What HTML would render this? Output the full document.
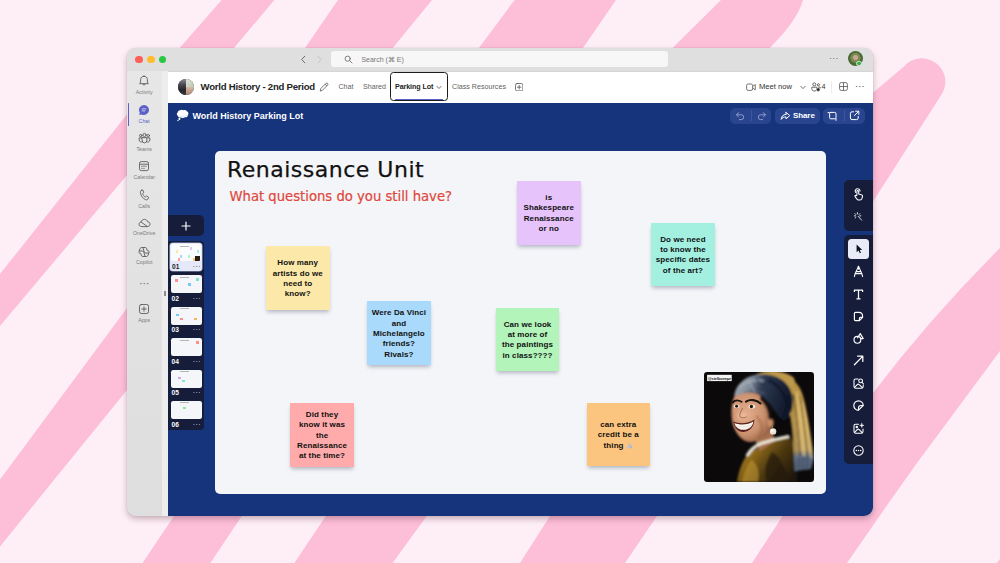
<!DOCTYPE html>
<html lang="en">
<head>
<meta charset="utf-8">
<title>World History Parking Lot</title>
<style>
html,body{margin:0;padding:0;}
body{width:1000px;height:563px;position:relative;overflow:hidden;background:#feeff6;font-family:"Liberation Sans",sans-serif;}
.abs{position:absolute;}
#bg{position:absolute;left:0;top:0;width:1000px;height:563px;}
#P{position:absolute;left:-127px;top:-48px;width:1000px;height:563px;}
#win{position:absolute;left:127px;top:48px;width:746px;height:468px;border-radius:9px;background:#dfdfdf;box-shadow:0 3px 6px rgba(90,40,60,.32),0 0 1.5px rgba(0,0,0,.12);overflow:hidden;}
#side{position:absolute;left:127px;top:71px;width:35px;height:445px;background:linear-gradient(180deg,#e7e7e7 0,#e2e2e2 50%,#dedede 100%);}
#side2{position:absolute;left:162px;top:71px;width:6px;height:445px;background:#ededed;}
#hdr{position:absolute;left:168px;top:71.5px;width:705px;height:31px;background:#fff;}
#wb{position:absolute;left:168px;top:102.5px;width:705px;height:413.5px;background:#16347c;}
#canvas{position:absolute;left:214.5px;top:150.5px;width:611.6px;height:343px;border-radius:5px;background:#f3f5f8;}
.tl{position:absolute;width:7.8px;height:7.8px;border-radius:50%;}
.lbl{position:absolute;width:41px;line-height:6.4px;text-align:center;font-size:5.2px;color:#7a7a7a;letter-spacing:.05px;}
.tab{position:absolute;font-size:7.15px;line-height:10.5px;color:#5f5f5f;white-space:nowrap;}
.pill{top:107.5px;height:16.3px;border-radius:5.5px;background:#29458f;}
.th{width:30.6px;height:18px;box-sizing:border-box;background:#f5f6f9;border-radius:2.2px;overflow:hidden;}
.th i{position:absolute;width:2.6px;height:2.6px;display:block;}
.tn{font-size:6.6px;line-height:8px;color:#fff;font-weight:bold;letter-spacing:.1px;}
.td{font-size:8px;line-height:8px;color:#cfd4e6;letter-spacing:.1px;}
.ti{left:852.1px;width:13px;height:13px;}
.hw{font-family:"DejaVu Sans","Liberation Sans",sans-serif;}
.note{position:absolute;width:63.5px;height:63.5px;box-shadow:0 3px 4px -1px rgba(50,55,80,.33);display:flex;align-items:center;justify-content:center;text-align:center;font-family:"Liberation Sans",sans-serif;font-weight:bold;font-size:8px;line-height:10.35px;color:#111;letter-spacing:.1px;}
.note div{white-space:nowrap;position:relative;top:1px;}
</style>
</head>
<body>
<svg id="bg" viewBox="0 0 1000 563">
<rect width="1000" height="563" fill="#feeff6"/>
<g fill="#fdbed8">
<path d="M221.6,0 L274.4,0 L235.2,46.4 L0,326 L0,274 L181,46.4 Z"/>
<path d="M338,0 L432,0 L394,46.4 L127,390 L0,546.5 L0,479.4 L127,308 L306,46.4 Z"/>
<path d="M514.6,0 L616,0 L584,46.4 L240.8,517.6 L210.4,563 L142.6,563 L173,517.6 L480,46.4 Z"/>
<path d="M721,0 L803,0 Q797,21 771,46.4 L425.6,517.6 L392.6,563 L294.4,563 L324.8,517.6 L674,46.4 Z"/>
<path d="M520,563 L549,517.6 L873,92.7 L904,66.5 A23.5 23.5 0 0 1 942.5,93 L873,201.4 L656,517.6 L625,563 Z"/>
<path d="M752,563 L782,517 L873,393 Q930,318 1000,248 L1000,351 L917,463 L890.7,500 L847,563 Z"/>
<path d="M997,563 L1000,559 L1000,563 Z"/>
</g>
</svg>

<div id="win">
  <div id="P">
  <!-- title bar -->
  <div class="tl" style="left:135.2px;top:55.5px;background:#fe5f57;"></div>
  <div class="tl" style="left:147.1px;top:55.5px;background:#febc2e;"></div>
  <div class="tl" style="left:158.6px;top:55.5px;background:#28c840;"></div>
  <svg class="abs" style="left:299px;top:55px;" width="26" height="9" viewBox="0 0 26 9" fill="none" stroke-width="1" stroke-linecap="round" stroke-linejoin="round"><path d="M5.8,1.2 L2.6,4.5 L5.8,7.8" stroke="#6a6a6a"/><path d="M19,1.2 L22.2,4.5 L19,7.8" stroke="#c2c2c2"/></svg>
  <div class="abs" style="left:331px;top:51px;width:336.5px;height:16.4px;border-radius:3px;background:#f7f7f7;"></div>
  <svg class="abs" style="left:344px;top:55px;" width="9" height="9" viewBox="0 0 9 9" fill="none" stroke="#707070" stroke-width="0.9" stroke-linecap="round"><circle cx="3.7" cy="3.7" r="2.6"/><path d="M5.7,5.7 L8,8"/></svg>
  <div class="abs" id="srch" style="left:361.4px;top:56px;font-size:7px;color:#767676;white-space:nowrap;">Search (⌘ E)</div>
  <div class="abs" style="left:829px;top:54.2px;font-size:9px;color:#666;letter-spacing:.2px;line-height:9px;">···</div>
  <div class="abs" id="av2" style="left:847.5px;top:51.3px;width:15px;height:15px;border-radius:50%;background:radial-gradient(circle at 50% 45%,#c9a58c 0 22%,#7a8a55 23% 45%,#4d6a35 46% 100%);overflow:hidden;"></div>
  <div class="abs" style="left:856.2px;top:60.8px;width:5.4px;height:5.4px;border-radius:50%;background:#2fb344;border:.8px solid #e0e0e0;box-sizing:border-box;"></div>

  <div class="abs" style="left:127px;top:69.5px;width:746px;height:2px;background:linear-gradient(180deg,rgba(0,0,0,0),rgba(0,0,0,.05));"></div>
  <div id="side"></div>
  <div id="side2"></div>
  <div id="hdr"></div>
  <div id="wb"></div>
  <div id="canvas"></div>
  <!--SIDEBAR-->
  <div class="abs" style="left:128.1px;top:102.5px;width:1.2px;height:23.5px;background:#5b5fc7;border-radius:1px;"></div>
  <!-- Activity -->
  <svg class="abs" style="left:138.2px;top:75.3px;" width="12" height="12" viewBox="0 0 12 12" fill="none" stroke="#555" stroke-width="0.85" stroke-linejoin="round" stroke-linecap="round"><path d="M6,1.2 C3.9,1.2 2.6,2.8 2.6,4.7 L2.6,7 L1.7,8.7 L10.3,8.7 L9.4,7 L9.4,4.7 C9.4,2.8 8.1,1.2 6,1.2 Z"/><path d="M4.7,9 C4.9,10.4 7.1,10.4 7.3,9"/></svg>
  <div class="lbl" style="left:123.7px;top:89.3px;">Activity</div>
  <!-- Chat (selected) -->
  <svg class="abs" style="left:138.2px;top:103.6px;" width="12" height="12" viewBox="0 0 12 12"><path d="M6,1 A5,5 0 1 1 3.6,10.4 L1.2,11 L1.8,8.7 A5,5 0 0 1 6,1 Z" fill="#5b5fc7"/><path d="M4.2,4.9 H7.9 M4.2,6.9 H6.8" stroke="#e9e9fb" stroke-width="0.8" stroke-linecap="round"/></svg>
  <div class="lbl" style="left:123.7px;top:117.8px;color:#5b5fc7;">Chat</div>
  <!-- Teams -->
  <svg class="abs" style="left:137.7px;top:131.8px;" width="13" height="12" viewBox="0 0 13 12" fill="none" stroke="#555" stroke-width="0.85" stroke-linejoin="round" stroke-linecap="round"><circle cx="6.5" cy="3" r="1.6"/><circle cx="2.7" cy="3.6" r="1.2"/><circle cx="10.3" cy="3.6" r="1.2"/><path d="M4.2,5.6 H8.8 V8.6 A2.3,2.3 0 0 1 4.2,8.6 Z"/><path d="M4,5.9 H1.2 V8 A2,2 0 0 0 4.3,9.7"/><path d="M9,5.9 H11.8 V8 A2,2 0 0 1 8.7,9.7"/></svg>
  <div class="lbl" style="left:123.7px;top:145.8px;">Teams</div>
  <!-- Calendar -->
  <svg class="abs" style="left:138.2px;top:160px;" width="12" height="12" viewBox="0 0 12 12" fill="none" stroke="#555" stroke-width="0.85" stroke-linejoin="round"><rect x="1.5" y="1.6" width="9" height="9" rx="1.8"/><path d="M1.5,4.2 H10.5"/><g fill="#555" stroke="none"><circle cx="4" cy="6.2" r=".65"/><circle cx="6" cy="6.2" r=".65"/><circle cx="8" cy="6.2" r=".65"/><circle cx="4" cy="8.3" r=".65"/><circle cx="6" cy="8.3" r=".65"/></g></svg>
  <div class="lbl" style="left:123.7px;top:174.3px;">Calendar</div>
  <!-- Calls -->
  <svg class="abs" style="left:138.2px;top:189px;" width="12" height="12" viewBox="0 0 12 12" fill="none" stroke="#555" stroke-width="0.85" stroke-linejoin="round" stroke-linecap="round"><path d="M3.4,1.3 L4.8,1 L5.7,3.6 L4.6,4.6 C5,6 6,7.3 7.4,8 L8.5,7 L10.6,8.3 L10,10 C9.6,10.9 8.6,11 7.7,10.7 C4.8,9.6 2.7,6.6 2.4,3.3 C2.3,2.4 2.6,1.6 3.4,1.3 Z"/></svg>
  <div class="lbl" style="left:123.7px;top:202.8px;">Calls</div>
  <!-- OneDrive -->
  <svg class="abs" style="left:137.7px;top:216.5px;" width="13" height="12" viewBox="0 0 13 12" fill="none" stroke="#555" stroke-width="0.85" stroke-linejoin="round" stroke-linecap="round"><path d="M3.6,9.6 C1.9,9.6 1,8.5 1,7.3 C1,6 2,5.2 3,5.1 C3.4,3.4 4.8,2.4 6.4,2.4 C8,2.4 9.2,3.3 9.7,4.8 C11.1,4.9 12,5.9 12,7.2 C12,8.5 11,9.6 9.6,9.6 Z"/><path d="M3.3,5.2 L9.3,9.4"/></svg>
  <div class="lbl" style="left:123.7px;top:229.6px;">OneDrive</div>
  <!-- Copilot -->
  <svg class="abs" style="left:138.2px;top:246px;" width="12" height="12" viewBox="0 0 12 12" fill="none" stroke="#555" stroke-width="0.85" stroke-linejoin="round" stroke-linecap="round"><path d="M4.6,1.5 H7.2 C8,1.5 8.5,2 8.7,2.7 L9.3,4.6 H9.9 C10.8,4.6 11.3,5.4 11,6.3 L10,9.3 C9.8,10 9.2,10.5 8.4,10.5 H4.9 C4.1,10.5 3.5,10 3.3,9.3 L2.7,7.4 H2.1 C1.2,7.4 .7,6.6 1,5.7 L2,2.7 C2.2,2 2.8,1.5 3.6,1.5 Z"/><path d="M4.9,1.6 L6.2,5.8 C6.4,6.5 7,7 7.7,7 H10.6"/><path d="M7.1,10.4 L5.8,6.2 C5.6,5.5 5,5 4.3,5 H1.4"/></svg>
  <div class="lbl" style="left:123.7px;top:258.6px;">Copilot</div>
  <div class="abs" style="left:139.2px;top:278.5px;font-size:10px;line-height:10px;color:#555;letter-spacing:.1px;">···</div>
  <!-- Apps -->
  <svg class="abs" style="left:138.2px;top:302.7px;" width="12" height="12" viewBox="0 0 12 12" fill="none" stroke="#555" stroke-width="0.85" stroke-linejoin="round" stroke-linecap="round"><rect x="1.5" y="1.5" width="9" height="9" rx="1.8"/><path d="M6,3.8 V8.2 M3.8,6 H8.2"/></svg>
  <div class="lbl" style="left:123.7px;top:316.6px;">Apps</div>
  <!--HEADER-->
  <div class="abs" id="av1" style="left:177.9px;top:78.6px;width:16px;height:16px;border-radius:50%;overflow:hidden;background:#3a3a40;">
    <div class="abs" style="left:0;top:0;width:8px;height:16px;background:linear-gradient(180deg,#8c8a92 0,#4a4850 35%,#25242a 70%,#3b3a42 100%);"></div>
    <div class="abs" style="left:8px;top:0;width:8px;height:8px;background:linear-gradient(135deg,#dfe6dc,#b9c7b2);"></div>
    <div class="abs" style="left:8px;top:8px;width:8px;height:8px;background:linear-gradient(180deg,#d9b9a2,#a88672);"></div>
  </div>
  <div class="abs" id="ttl" style="left:200.6px;top:80.2px;font-size:9.6px;font-weight:bold;color:#242424;white-space:nowrap;letter-spacing:-.25px;line-height:13px;">World History - 2nd Period</div>
  <svg class="abs" style="left:319.4px;top:81.6px;" width="10" height="10" viewBox="0 0 10 10" fill="none" stroke="#555" stroke-width="0.8" stroke-linejoin="round" stroke-linecap="round"><path d="M1.3,8.7 L1.9,6.4 L6.9,1.4 A1,1 0 0 1 8.6,3.1 L3.6,8.1 Z"/><path d="M6.2,2.2 L7.8,3.8"/></svg>
  <div class="tab" id="t1" style="left:338.4px;top:81.6px;">Chat</div>
  <div class="tab" id="t2" style="left:363px;top:81.6px;">Shared</div>
  <div class="abs" style="left:389.6px;top:71.6px;width:58px;height:29.8px;box-sizing:border-box;border:1.1px solid #1c1c1c;border-radius:3.5px;"></div>
  <div class="abs" style="left:394.6px;top:98.6px;width:48px;height:1.4px;background:#5b5fc7;border-radius:1px;"></div>
  <div class="tab" id="t3" style="left:395px;top:81.6px;font-weight:bold;color:#242424;letter-spacing:-.1px;">Parking Lot</div>
  <svg class="abs" style="left:436px;top:84.5px;" width="6" height="5" viewBox="0 0 6 5" fill="none" stroke="#555" stroke-width="0.8" stroke-linecap="round" stroke-linejoin="round"><path d="M.9,1.3 L3,3.5 L5.1,1.3"/></svg>
  <div class="tab" id="t4" style="left:452px;top:81.6px;">Class Resources</div>
  <svg class="abs" style="left:515px;top:82.6px;" width="8.4" height="8.4" viewBox="0 0 8.4 8.4" fill="none" stroke="#555" stroke-width="0.8" stroke-linecap="round"><rect x=".5" y=".5" width="7.4" height="7.4" rx="1.6"/><path d="M4.2,2.4 V6 M2.4,4.2 H6"/></svg>
  <!-- right header -->
  <svg class="abs" style="left:745.8px;top:82.6px;" width="10" height="8.4" viewBox="0 0 10 8.4" fill="none" stroke="#555" stroke-width="0.8" stroke-linejoin="round"><rect x=".6" y="1" width="6" height="6.4" rx="1.5"/><path d="M6.8,3.2 L9.3,1.6 V6.8 L6.8,5.2"/></svg>
  <div class="tab" id="t5" style="left:759px;top:81.6px;color:#333;font-size:7.6px;">Meet now</div>
  <svg class="abs" style="left:799.5px;top:84.7px;" width="6" height="5" viewBox="0 0 6 5" fill="none" stroke="#555" stroke-width="0.8" stroke-linecap="round" stroke-linejoin="round"><path d="M.7,1.2 L3,3.6 L5.3,1.2"/></svg>
  <svg class="abs" style="left:810.5px;top:81.8px;" width="10" height="10" viewBox="0 0 10 10" fill="none" stroke="#444" stroke-width="0.8" stroke-linejoin="round"><circle cx="3.3" cy="2.4" r="1.5"/><circle cx="7.4" cy="2.8" r="1.1"/><path d="M.8,5.2 H5.8 V6.6 C5.8,8.2 4.8,9 3.3,9 C1.8,9 .8,8.2 .8,6.6 Z"/><path d="M6.8,5.2 H9.2 V6.4"/><circle cx="7.2" cy="7.6" r="1.9" fill="#333" stroke="#fff" stroke-width=".5"/></svg>
  <div class="tab" style="left:821.6px;top:81.8px;color:#333;font-size:7.2px;">4</div>
  <div class="abs" style="left:831px;top:80.5px;width:.7px;height:12px;background:#ececec;"></div>
  <svg class="abs" style="left:838.5px;top:82.2px;" width="9" height="9" viewBox="0 0 9 9" fill="none" stroke="#555" stroke-width="0.8" stroke-linejoin="round"><rect x=".6" y=".6" width="7.8" height="7.8" rx="1.6"/><path d="M4.5,.6 V8.4 M.6,4.5 H8.4"/></svg>
  <div class="abs" style="left:855px;top:81.5px;font-size:9px;color:#444;letter-spacing:.2px;line-height:9px;">···</div>
  <!--WBTOP-->
  <svg class="abs" style="left:175.6px;top:109px;" width="13" height="13" viewBox="0 0 13 13"><path d="M3.4,1.6 C4.6,.5 6.4,.6 7.2,1.3 C8.6,.7 10.6,1.2 11.2,2.6 C12.6,3.2 12.8,5.2 11.8,6.2 C11.9,7.6 10.4,8.6 9,8.2 C8,9.2 6,9.2 5.1,8.4 C3.6,8.9 2,8.2 1.8,6.8 C.5,6.1 .5,4.1 1.7,3.5 C1.7,2.6 2.4,1.8 3.4,1.6 Z" fill="#fff"/><circle cx="3.4" cy="9.9" r="1.05" fill="#fff"/><circle cx="2" cy="11.5" r=".65" fill="#fff"/><path d="M3.6,6.8 C5,7.8 8.5,7.8 10.6,6.4" stroke="#cfd8ee" stroke-width=".7" fill="none"/></svg>
  <div class="abs" id="wbt" style="left:192.4px;top:109.6px;font-size:9px;font-weight:bold;color:#fff;white-space:nowrap;line-height:12px;letter-spacing:0;">World History Parking Lot</div>
  <!-- pills -->
  <div class="abs pill" style="left:729.5px;width:41px;"></div>
  <div class="abs pill" style="left:775px;width:44.5px;"></div>
  <div class="abs pill" style="left:823.3px;width:41.8px;"></div>
  <svg class="abs" style="left:734.5px;top:110.5px;" width="11" height="10" viewBox="0 0 11 10" fill="none" stroke="#8f9dc9" stroke-width="1" stroke-linecap="round" stroke-linejoin="round"><path d="M3.6,1.6 L1.5,3.8 L3.6,6"/><path d="M1.7,3.8 H6.3 A2.4,2.4 0 0 1 6.3,8.6 H4.4"/></svg>
  <div class="abs" style="left:750.6px;top:110px;width:.7px;height:11px;background:#3e56a0;"></div>
  <svg class="abs" style="left:755.5px;top:110.5px;" width="11" height="10" viewBox="0 0 11 10" fill="none" stroke="#8f9dc9" stroke-width="1" stroke-linecap="round" stroke-linejoin="round"><path d="M7.4,1.6 L9.5,3.8 L7.4,6"/><path d="M9.3,3.8 H4.7 A2.4,2.4 0 0 0 4.7,8.6 H6.6"/></svg>
  <svg class="abs" style="left:779.5px;top:110.5px;" width="11" height="10" viewBox="0 0 11 10" fill="none" stroke="#fff" stroke-width="1" stroke-linecap="round" stroke-linejoin="round"><path d="M6,1.4 L9.8,4.6 L6,7.8 V5.9 C3.6,5.8 2.2,6.6 1.2,8.4 C1.4,5.4 3,3.5 6,3.3 Z"/></svg>
  <div class="abs" id="shr" style="left:793px;top:111.2px;font-size:8px;font-weight:bold;color:#fff;line-height:10.4px;letter-spacing:-.1px;">Share</div>
  <svg class="abs" style="left:827px;top:110px;" width="11" height="11" viewBox="0 0 11 11" fill="none" stroke="#fff" stroke-width="1" stroke-linecap="round" stroke-linejoin="round"><rect x="2.6" y="2.4" width="6.4" height="6.4" rx="1.2"/><path d="M1,2.6 H2.4 M9,8.6 V10.4"/></svg>
  <div class="abs" style="left:844.2px;top:110px;width:.7px;height:11px;background:#3e56a0;"></div>
  <svg class="abs" style="left:849.2px;top:110px;" width="11" height="11" viewBox="0 0 11 11" fill="none" stroke="#fff" stroke-width="1" stroke-linecap="round" stroke-linejoin="round"><path d="M4.6,1.8 H3 A1.6,1.6 0 0 0 1.4,3.4 V8 A1.6,1.6 0 0 0 3,9.6 H7.6 A1.6,1.6 0 0 0 9.2,8 V6.4"/><path d="M6.6,1.2 H9.8 V4.4 M9.6,1.4 L5.4,5.6"/></svg>
  <!--CANVAS-->
  <div class="abs hw" id="h1" style="left:227px;top:155.9px;font-size:22px;color:#111;white-space:nowrap;line-height:28px;letter-spacing:.5px;-webkit-text-stroke:.25px #111;">Renaissance Unit</div>
  <div class="abs hw" id="h2" style="left:229.5px;top:186.8px;font-size:13.2px;color:#e0473c;white-space:nowrap;line-height:20px;-webkit-text-stroke:.2px #e0473c;">What questions do you still have?</div>
  <div class="note" style="left:266px;top:246.2px;background:#fce9a9;"><div>How many<br>artists do we<br>need to<br>know?</div></div>
  <div class="note" style="left:367.2px;top:301.4px;background:#a9d9fb;"><div>Were Da Vinci<br>and<br>Michelangelo<br>friends?<br>Rivals?</div></div>
  <div class="note" style="left:517px;top:181px;background:#e6c3fb;"><div>is<br>Shakespeare<br>Renaissance<br>or no</div></div>
  <div class="note" style="left:651.2px;top:222.7px;background:#a3f0e1;"><div>Do we need<br>to know the<br>specific dates<br>of the art?</div></div>
  <div class="note" style="left:495.8px;top:307.7px;background:#b3f4ba;"><div>Can we look<br>at more of<br>the paintings<br>in class????</div></div>
  <div class="note" style="left:290.3px;top:403.2px;background:#ffabab;"><div>Did they<br>know it was<br>the<br>Renaissance<br>at the time?</div></div>
  <div class="note" style="left:586.5px;top:402.6px;background:#fcc57f;"><div>can extra<br>credit be a<br>thing <svg width="7" height="7" viewBox="0 0 7 7" style="vertical-align:-1px;"><path d="M3.4,.8 L1.4,4.2 L.6,6.4 L2.8,6.2 L3.4,4.4 Z" fill="#b9c7dc"/><path d="M3.6,.8 L5.6,4.2 L6.4,6.4 L4.2,6.2 L3.6,4.4 Z" fill="#a9b9d2"/></svg></div></div>
  <svg class="abs" style="left:704.2px;top:371.5px;border-radius:3.2px;" width="110" height="110" viewBox="0 0 110 110">
    <defs>
      <filter id="bl" x="-10%" y="-10%" width="120%" height="120%"><feGaussianBlur stdDeviation="0.8"/></filter>
      <filter id="bl2" x="-10%" y="-10%" width="120%" height="120%"><feGaussianBlur stdDeviation="0.4"/></filter>
      <linearGradient id="jk" x1="0" y1="0.2" x2="1" y2="0.8"><stop offset="0" stop-color="#b98d2b"/><stop offset=".3" stop-color="#8a6619"/><stop offset=".6" stop-color="#4d3910"/><stop offset="1" stop-color="#1e160a"/></linearGradient>
      <linearGradient id="tb" x1="0" y1="0" x2="1" y2=".25"><stop offset="0" stop-color="#a6adb6"/><stop offset=".3" stop-color="#858f9d"/><stop offset=".5" stop-color="#2e3a52"/><stop offset="1" stop-color="#10182b"/></linearGradient>
      <linearGradient id="yc" x1="0" y1="0" x2="0" y2="1"><stop offset="0" stop-color="#b08a3c"/><stop offset=".45" stop-color="#d1ab5c"/><stop offset=".78" stop-color="#c4a564"/><stop offset=".84" stop-color="#66758a"/><stop offset="1" stop-color="#46546a"/></linearGradient>
      <radialGradient id="sk" cx=".36" cy=".42" r=".7"><stop offset="0" stop-color="#e3ad8c"/><stop offset=".6" stop-color="#cc9270"/><stop offset="1" stop-color="#8c583c"/></radialGradient>
    </defs>
    <rect width="110" height="110" fill="#0b090a"/>
    <g filter="url(#bl)">
      <!-- jacket -->
      <path d="M33,110 C35,98 38,90 43,83 C52,76 70,68 86,65 C91,72 93,90 93,110 Z" fill="url(#jk)"/>
      <path d="M38,110 C40,100 43,93 47,88 C53,90 56,100 54,110 Z" fill="#c79a35" opacity=".55"/>
      <path d="M62,110 C60,98 62,88 68,80 C76,84 82,96 84,110 Z" fill="#241a08" opacity=".7"/>
      <!-- hanging cloth -->
      <path d="M80,3 C90,6 97,14 100,28 C104,44 107,66 110,86 L107,97 L90.5,99 C90,80 89,62 87,48 C85,34 82,20 76,10 Z" fill="url(#yc)"/>
      <path d="M86,20 C89,40 91,62 92.5,84" stroke="#8c6c2c" stroke-width="1.6" fill="none" opacity=".85"/>
      <path d="M89.5,22 C92.5,44 94.5,64 96,84" stroke="#2a2216" stroke-width="1.3" fill="none" opacity=".8"/>
      <path d="M92.5,20 C96,42 98.5,62 100,84" stroke="#e2c784" stroke-width="1.8" fill="none" opacity=".75"/>
      <path d="M96,24 C99.5,44 101.5,64 103.5,84" stroke="#4a3b1e" stroke-width="1.1" fill="none" opacity=".75"/>
      <path d="M99,30 C102.5,50 104.5,68 107,86" stroke="#dcbf7a" stroke-width="1.6" fill="none" opacity=".7"/>
      <path d="M92,86 L106,84 L107,97 L91,99 Z" fill="#56657b" opacity=".85"/>
      <path d="M95,86 V98 M99,85.5 V98 M103,85 V97" stroke="#2f3a4c" stroke-width=".9" opacity=".8"/>
      <!-- yellow top -->
      <path d="M50,4 C58,-3 80,-3 90,6 C92,10 90,15 86,15 C76,8 62,6.5 52,9 Z" fill="#bd9a4c"/>
      <!-- neck -->
      <path d="M49,64 L67,55 L71,69 L56,79 Z" fill="#a8704e"/>
      <!-- face -->
      <path d="M30.5,24 C37,20 50,19 58,24 C66,30 69,42 68,54 C66,62 58,68 48,70 C40,71 33,64 29.5,54 C26.5,45 27,32 30.5,24 Z" fill="url(#sk)"/>
      <ellipse cx="38" cy="44" rx="5" ry="4" fill="#eec0a2" opacity=".6"/>
      <path d="M52,44 C58,50 60,58 54,66" stroke="#94603f" stroke-width="3" fill="none" opacity=".45"/>
      <!-- ear -->
      <ellipse cx="66.4" cy="50" rx="3.2" ry="5.4" transform="rotate(-8 66.4 50)" fill="#c88a66"/>
      <!-- hair -->
      <path d="M56,22 C64,26 69,36 68.5,48 L64.5,47 C64.5,40 62,33 56,28 Z" fill="#15100e"/>
      <!-- turban -->
      <path d="M30.2,24.5 C31,14 40,4 54,2.5 C70,1 84,8 88,22 C90,32 89,42 80,49.5 C76,46 73,42 70,38 C66,30 60,24 50,21 C43,20 36,22 30.2,24.5 Z" fill="url(#tb)"/>
      <path d="M35,16 C42,9 52,7 60,9" stroke="#aab2bd" stroke-width="2.4" fill="none" opacity=".6"/>
      <path d="M40,21 C46,17 54,18 60,22" stroke="#5d6a7c" stroke-width="1.4" fill="none" opacity=".7"/>
      <path d="M52,6 C56,12 58,18 62,24" stroke="#3a465c" stroke-width="1.6" fill="none" opacity=".6"/>
      <path d="M44,8 C47,13 49,17 51,20" stroke="#b4bcc6" stroke-width="1.4" fill="none" opacity=".55"/>
      <path d="M64,8 C74,12 82,22 84,36" stroke="#0c1222" stroke-width="3.2" fill="none" opacity=".55"/>
      <!-- collar -->
      <path d="M43.4,83 C47,77 52,73.5 57,71.5 C66,68.5 76,66 84,64.5" stroke="#ebe5d6" stroke-width="3" fill="none" stroke-linecap="round"/>
    </g>
    <g filter="url(#bl2)">
      <path d="M28.6,30.5 C31,28 34.5,28 37.5,29.8" stroke="#1b120e" stroke-width="1.9" fill="none" stroke-linecap="round"/>
      <path d="M42,29.6 C46,27 52.5,27.6 56.5,31.5" stroke="#1b120e" stroke-width="2.1" fill="none" stroke-linecap="round"/>
      <ellipse cx="32.6" cy="34.2" rx="2.9" ry="1.8" fill="#f1e6dc"/><circle cx="32.6" cy="34.3" r="1.45" fill="#20130d"/>
      <ellipse cx="47.8" cy="34.4" rx="3.4" ry="2" fill="#f1e6dc"/><circle cx="47.4" cy="34.5" r="1.65" fill="#20130d"/>
      <path d="M38.6,36 C36.8,40 35,43 36.2,45 C38,46.4 41.4,46 42.6,44.6" stroke="#96603f" stroke-width="1" fill="none" opacity=".85"/>
      <path d="M28.6,40 C28.2,46 29,52 31,57" stroke="#9a6243" stroke-width="1.6" fill="none" opacity=".5"/>
      <path d="M29.4,49.6 C35,52.2 44,52 50.4,47.6 C50.4,54 46,59.6 39.6,60 C34,60.2 30.2,55.8 29.4,49.6 Z" fill="#5a1f1c"/>
      <path d="M30.4,50.9 C35.6,53.2 44,53 49.4,49.4 C49,53.6 45.4,57.6 39.8,57.8 C35,58 31.4,55 30.4,50.9 Z" fill="#f8f5ee"/>
      <path d="M31,54.2 C36,55.6 43,55.2 48.4,52.6" stroke="#c9c0b2" stroke-width=".4" fill="none"/>
      <circle cx="69.1" cy="59.4" r="3.2" fill="#e9e3d6"/><circle cx="68.2" cy="58.4" r="1.3" fill="#fff"/>
      <path d="M68.4,53.4 V56.4" stroke="#b9a06c" stroke-width=".6"/>
    </g>
    <rect x="3.1" y="2.8" width="24.6" height="6.3" fill="#f4f4f4"/>
    <text x="4" y="7.6" font-family="Liberation Sans, sans-serif" font-size="4.1" font-weight="bold" fill="#111" textLength="22.8" lengthAdjust="spacingAndGlyphs">@stelbonepz</text>
  </svg>
  <!--LEFTPANEL-->
  <div class="abs" style="left:168px;top:214.9px;width:36.3px;height:21.4px;background:#161d3a;border-radius:0 5px 5px 0;"></div>
  <svg class="abs" style="left:181px;top:220.6px;" width="10" height="10" viewBox="0 0 10 10" stroke="#fff" stroke-width="1.2" stroke-linecap="round"><path d="M5,1 V9 M1,5 H9"/></svg>
  <div class="abs" style="left:168px;top:240.5px;width:36.3px;height:189.8px;background:#161d3a;border-radius:0 4px 4px 0;"></div>
  <div class="abs" style="left:169.6px;top:243px;width:32.8px;height:28.4px;background:#e4e8f8;border-radius:3px;box-shadow:0 0 0 .6px #9aa3c4;"></div>
  <div class="abs" style="left:163.5px;top:291.2px;width:.8px;height:5px;background:#8c8c8c;"></div>
  <div class="abs" style="left:165.1px;top:291.2px;width:.8px;height:5px;background:#8c8c8c;"></div>
  <div class="abs th" style="left:170.9px;top:244.3px;height:16.8px;background:#fafbfd;"><i style="left:9px;top:1.6px;width:9px;height:.7px;background:#b5b5b5;"></i><i style="left:5px;top:6px;background:#fce9a9;"></i><i style="left:9px;top:11px;background:#a9d9fb;"></i><i style="left:19px;top:3px;background:#e6c3fb;"></i><i style="left:26px;top:6px;background:#a3f0e1;"></i><i style="left:17px;top:11px;background:#b3f4ba;"></i><i style="left:7px;top:14px;background:#ff9b9b;"></i><i style="left:22px;top:14px;background:#fcc57f;"></i><i style="left:24.5px;top:11.5px;width:5px;height:5px;background:#2a1d12;"></i></div>
  <div class="abs tn" style="left:172px;top:262.8px;color:#1d1d28;">01</div><div class="abs td" style="left:192.6px;top:262.8px;color:#444;">···</div>
  <div class="abs th" style="left:171px;top:275.3px;"><i style="left:9px;top:1.6px;width:9px;height:.7px;background:#b5b5b5;"></i><i style="left:4px;top:4px;background:#ff8f8f;"></i><i style="left:17px;top:8px;background:#7cc8f5;"></i><i style="left:25px;top:3px;background:#7fe3cf;"></i></div>
  <div class="abs tn" style="left:171.6px;top:294.9px;">02</div><div class="abs td" style="left:192.6px;top:294.9px;">···</div>
  <div class="abs th" style="left:171px;top:306.7px;"><i style="left:9px;top:1.6px;width:9px;height:.7px;background:#b5b5b5;"></i><i style="left:5px;top:7px;background:#7cc8f5;"></i><i style="left:9px;top:11px;background:#ff8f8f;"></i><i style="left:23px;top:11px;background:#f9b25e;"></i></div>
  <div class="abs tn" style="left:171.6px;top:326.3px;">03</div><div class="abs td" style="left:192.6px;top:326.3px;">···</div>
  <div class="abs th" style="left:171px;top:338.1px;"><i style="left:9px;top:1.6px;width:9px;height:.7px;background:#b5b5b5;"></i><i style="left:25px;top:3px;background:#ff8f8f;"></i></div>
  <div class="abs tn" style="left:171.6px;top:357.7px;">04</div><div class="abs td" style="left:192.6px;top:357.7px;">···</div>
  <div class="abs th" style="left:171px;top:369.5px;"><i style="left:9px;top:1.6px;width:9px;height:.7px;background:#b5b5b5;"></i><i style="left:7px;top:7px;background:#d9a3f5;"></i><i style="left:11px;top:10px;background:#7fe3cf;"></i></div>
  <div class="abs tn" style="left:171.6px;top:389.1px;">05</div><div class="abs td" style="left:192.6px;top:389.1px;">···</div>
  <div class="abs th" style="left:171px;top:400.9px;"><i style="left:9px;top:1.6px;width:9px;height:.7px;background:#b5b5b5;"></i><i style="left:12px;top:6px;background:#8fe89a;"></i></div>
  <div class="abs tn" style="left:171.6px;top:420.5px;">06</div><div class="abs td" style="left:192.6px;top:420.5px;">···</div>
  <!--RIGHTTOOLS-->
  <div class="abs" style="left:844.4px;top:180px;width:28.6px;height:51.2px;background:#161d3a;border-radius:5px 0 0 5px;"></div>
  <div class="abs" style="left:844.4px;top:235.4px;width:28.6px;height:228.6px;background:#161d3a;border-radius:5px 0 0 5px;"></div>
  <div class="abs" style="left:848.4px;top:239px;width:20.6px;height:19.8px;background:#e9ecf8;border-radius:3.5px;"></div>
  <!-- hand -->
  <svg class="abs ti" style="top:188.2px;" viewBox="0 0 13 13" fill="none" stroke="#fff" stroke-width="1.05" stroke-linecap="round" stroke-linejoin="round"><path d="M4.9,7.2 V3.4 A.9,.9 0 0 1 6.7,3.4 V6 L9.4,6.7 C10.3,6.9 10.7,7.6 10.5,8.5 L10,10.4 C9.7,11.4 9,12 8,12 H6.6 C5.8,12 5.2,11.6 4.8,11 L3,8.4 C2.6,7.7 3.5,7 4.1,7.6 Z"/><path d="M3.6,4.4 A2.4,2.4 0 1 1 8,3.2"/></svg>
  <!-- wand -->
  <svg class="abs ti" style="top:210.6px;left:853.2px;width:10.6px;height:10.6px;" viewBox="0 0 13 13" fill="none" stroke="#fff" stroke-width="1.05" stroke-linecap="round"><path d="M6.4,6.6 L10.6,11.2"/><path d="M5.4,2 V3.6 M2.4,3.2 L3.5,4.3 M8.4,3.2 L7.3,4.3 M1.6,6 H3.2 M2.6,8.8 L3.6,7.8 M9.6,6 H8.2"/></svg>
  <!-- pointer -->
  <svg class="abs ti" style="top:242.4px;" viewBox="0 0 13 13"><path d="M4.6,2.4 V10.2 L6.5,8.4 L7.8,11.2 L9,10.7 L7.7,7.9 H10.2 Z" fill="#0d1020"/></svg>
  <!-- pen -->
  <svg class="abs ti" style="top:264.8px;" viewBox="0 0 13 13" fill="none" stroke="#fff" stroke-width="1.05" stroke-linecap="round" stroke-linejoin="round"><path d="M6.5,1.3 L3.2,8.6 H9.8 Z"/><path d="M6.5,1.3 V4.2"/><path d="M3.2,8.6 L2.4,11.6 M9.8,8.6 L10.6,11.6"/><path d="M4.2,6.6 H8.8" /></svg>
  <!-- T -->
  <svg class="abs ti" style="top:287.6px;" viewBox="0 0 13 13" fill="none" stroke="#fff" stroke-width="1.25" stroke-linecap="round" stroke-linejoin="round"><path d="M2.4,3.4 V2.2 H10.6 V3.4 M6.5,2.2 V10.8 M4.9,10.8 H8.1"/></svg>
  <!-- note -->
  <svg class="abs ti" style="top:309.8px;" viewBox="0 0 13 13" fill="none" stroke="#fff" stroke-width="1.15" stroke-linecap="round" stroke-linejoin="round"><path d="M2.4,3.4 A1,1 0 0 1 3.4,2.4 H7 C9.4,2.4 10.6,4 10.6,6.4 V7.4 L7.4,10.6 H3.4 A1,1 0 0 1 2.4,9.6 Z"/><path d="M10.4,7.4 H8.4 A1,1 0 0 0 7.4,8.4 V10.4"/></svg>
  <!-- shapes -->
  <svg class="abs ti" style="top:332.2px;" viewBox="0 0 13 13" fill="none" stroke="#fff" stroke-width="1.15" stroke-linecap="round" stroke-linejoin="round"><circle cx="5.4" cy="7.8" r="3.4"/><path d="M5.6,5.8 L8.2,1.6 L11.2,6.6 H8.4"/></svg>
  <!-- arrow -->
  <svg class="abs ti" style="top:354.4px;" viewBox="0 0 13 13" fill="none" stroke="#fff" stroke-width="1.25" stroke-linecap="round" stroke-linejoin="round"><path d="M2.4,10.8 L10.6,2.4 M5.6,2.2 H10.8 V7.4"/></svg>
  <!-- image search -->
  <svg class="abs ti" style="top:376.8px;" viewBox="0 0 13 13" fill="none" stroke="#fff" stroke-width="1.05" stroke-linecap="round" stroke-linejoin="round"><path d="M6,2 H3.6 A1.6,1.6 0 0 0 2,3.6 V9.6 A1.6,1.6 0 0 0 3.6,11.2 H9.6 A1.6,1.6 0 0 0 11.2,9.6 V8"/><path d="M2.4,10.6 L5.2,7.6 C5.8,7 6.6,7 7.2,7.6 L10.6,10.8"/><circle cx="8.6" cy="3.8" r="1.9"/><path d="M10,5.3 L11.6,7"/></svg>
  <!-- sticker -->
  <svg class="abs ti" style="top:399.2px;" viewBox="0 0 13 13" fill="none" stroke="#fff" stroke-width="1.15" stroke-linecap="round" stroke-linejoin="round"><path d="M11.2,6.5 A4.7,4.7 0 1 0 6.5,11.2 Z"/><path d="M6.5,11 V9 A2.5,2.5 0 0 1 9,6.5 H11"/></svg>
  <!-- image sparkle -->
  <svg class="abs ti" style="top:421.6px;" viewBox="0 0 13 13" fill="none" stroke="#fff" stroke-width="1.05" stroke-linecap="round" stroke-linejoin="round"><path d="M6.6,2.2 H3.6 A1.6,1.6 0 0 0 2,3.8 V9.6 A1.6,1.6 0 0 0 3.6,11.2 H9.4 A1.6,1.6 0 0 0 11,9.6 V7"/><path d="M2.4,10.6 L5.2,7.6 C5.8,7 6.6,7 7.2,7.6 L10.4,10.8"/><circle cx="4.8" cy="5" r=".7" fill="#fff"/><path d="M9.8,1.2 L10.3,2.9 L12,3.4 L10.3,3.9 L9.8,5.6 L9.3,3.9 L7.6,3.4 L9.3,2.9 Z" fill="#fff" stroke-width=".4"/></svg>
  <!-- more -->
  <svg class="abs ti" style="top:443.6px;" viewBox="0 0 13 13" fill="none" stroke="#fff" stroke-width="1.05"><circle cx="6.5" cy="6.5" r="4.7"/><g fill="#fff" stroke="none"><circle cx="4.3" cy="6.5" r=".75"/><circle cx="6.5" cy="6.5" r=".75"/><circle cx="8.7" cy="6.5" r=".75"/></g></svg>
  </div>
</div>
</body>
</html>
